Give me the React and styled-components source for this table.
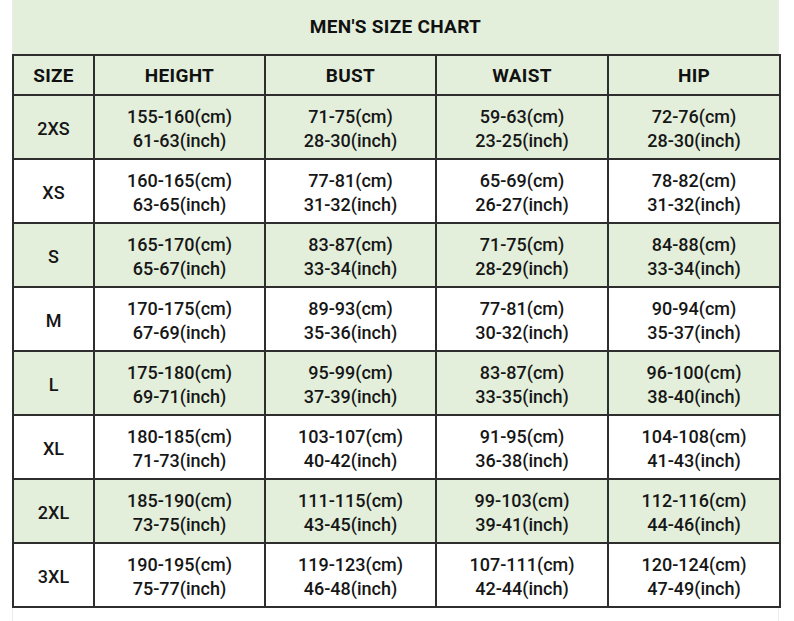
import React from "react";
import styled, { createGlobalStyle } from "styled-components";

const Global = createGlobalStyle`
  html, body { margin: 0; padding: 0; background: #ffffff; }
  body { font-family: Roboto, "Liberation Sans", sans-serif; color: #111; }
`;

const Sheet = styled.div`
  margin-left: 12px;
  width: 767px;
  min-height: 621px;
  box-sizing: border-box;
  border-left: 1px solid #ececec;
  border-right: 1px solid #ececec;
`;

const TitleBar = styled.div`
  height: 54px;
  background: #e3efdb;
  display: flex;
  align-items: center;
  justify-content: center;
  font-weight: 700;
  font-size: 19px;
  letter-spacing: 0.3px;
  padding-bottom: 1px;
  box-sizing: border-box;
`;

const Table = styled.table`
  width: 767px;
  margin-left: -1px;
  border-collapse: collapse;
  table-layout: fixed;
  border: 2px solid #111;
`;

const HeadCell = styled.th`
  height: 38px;
  padding: 0;
  border: 2px solid #2e2e2e;
  background: #e3efdb;
  font-weight: 700;
  font-size: 19px;
  letter-spacing: 0.3px;
  text-align: center;
  vertical-align: middle;
`;

const Row = styled.tr`
  background: ${(p) => (p.$green ? "#e3efdb" : "#ffffff")};
`;

const Cell = styled.td`
  height: 59px;
  padding: 3px 0 0;
  border: 2px solid #2e2e2e;
  text-align: center;
  vertical-align: middle;
  font-size: 18px;
  font-weight: 500;
  line-height: 24px;
  color: #161616;
`;

const Line = styled.div`
  white-space: nowrap;
`;

const data = [
  ["2XS", "155-160", "61-63", "71-75", "28-30", "59-63", "23-25", "72-76", "28-30"],
  ["XS", "160-165", "63-65", "77-81", "31-32", "65-69", "26-27", "78-82", "31-32"],
  ["S", "165-170", "65-67", "83-87", "33-34", "71-75", "28-29", "84-88", "33-34"],
  ["M", "170-175", "67-69", "89-93", "35-36", "77-81", "30-32", "90-94", "35-37"],
  ["L", "175-180", "69-71", "95-99", "37-39", "83-87", "33-35", "96-100", "38-40"],
  ["XL", "180-185", "71-73", "103-107", "40-42", "91-95", "36-38", "104-108", "41-43"],
  ["2XL", "185-190", "73-75", "111-115", "43-45", "99-103", "39-41", "112-116", "44-46"],
  ["3XL", "190-195", "75-77", "119-123", "46-48", "107-111", "42-44", "120-124", "47-49"],
];

const Measure = ({ cm, inch }) => (
  <Cell>
    <Line>{cm}(cm)</Line>
    <Line>{inch}(inch)</Line>
  </Cell>
);

export default function App() {
  return (
    <>
      <Global />
      <Sheet>
        <TitleBar>MEN'S SIZE CHART</TitleBar>
        <Table>
          <colgroup>
            <col style={{ width: 81 }} />
            <col style={{ width: 171 }} />
            <col style={{ width: 171 }} />
            <col style={{ width: 172 }} />
            <col style={{ width: 172 }} />
          </colgroup>
          <thead>
            <tr>
              <HeadCell>SIZE</HeadCell>
              <HeadCell>HEIGHT</HeadCell>
              <HeadCell>BUST</HeadCell>
              <HeadCell>WAIST</HeadCell>
              <HeadCell>HIP</HeadCell>
            </tr>
          </thead>
          <tbody>
            {data.map((r, i) => (
              <Row key={r[0]} $green={i % 2 === 0}>
                <Cell>{r[0]}</Cell>
                <Measure cm={r[1]} inch={r[2]} />
                <Measure cm={r[3]} inch={r[4]} />
                <Measure cm={r[5]} inch={r[6]} />
                <Measure cm={r[7]} inch={r[8]} />
              </Row>
            ))}
          </tbody>
        </Table>
      </Sheet>
    </>
  );
}
